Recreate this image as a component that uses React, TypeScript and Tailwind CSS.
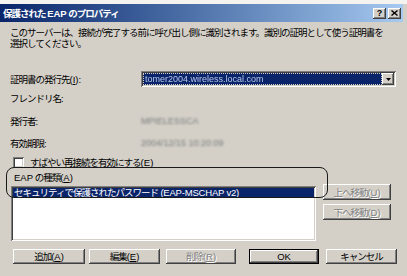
import React from "react";

const raised =
  "shadow-[inset_-1px_-1px_0_#404040,inset_1px_1px_0_#ffffff,inset_-2px_-2px_0_#808080,inset_2px_2px_0_#d4d0c8]";
const sunken =
  "shadow-[inset_1px_1px_0_#808080,inset_-1px_-1px_0_#ffffff,inset_2px_2px_0_#404040,inset_-2px_-2px_0_#d4d0c8]";

function Key({ k }: { k: string }) {
  return <span className="underline">{k}</span>;
}

function WinButton({
  children,
  className = "",
  disabled = false,
  isDefault = false,
}: {
  children: React.ReactNode;
  className?: string;
  disabled?: boolean;
  isDefault?: boolean;
}) {
  return (
    <div
      className={`h-[15px] flex items-center justify-center bg-[#d4d0c8] ${
        isDefault ? "border border-black" : ""
      } ${raised} ${disabled ? "text-[#808080] [text-shadow:1px_1px_0_#ffffff]" : "text-black"} ${className}`}
    >
      {children}
    </div>
  );
}

export default function App() {
  return (
    <div
      className="w-[407px] h-[276px] bg-[#d4d0c8] overflow-hidden relative text-black text-[9.5px] tracking-[-1px] leading-[11px]"
      style={{ fontFamily: '"Liberation Sans", "Noto Sans CJK JP", sans-serif' }}
    >
      <div className="h-[4px] bg-[#f4f3ef]" />

      {/* タイトルバー */}
      <div className="mr-[4px] h-[18px] flex items-center bg-linear-to-r from-[#0a246a] to-[#a6caf0] pl-[3px] pr-[2px]">
        <span className="font-bold text-white text-[9.5px]">
          保護された <span className="tracking-normal">EAP</span> のプロパティ
        </span>
        <div className="ml-auto flex gap-[2px]">
          <div className={`w-[13px] h-[11px] bg-[#d4d0c8] ${raised} flex items-center justify-center font-bold text-[9px] tracking-normal`}>
            ?
          </div>
          <div className={`w-[13px] h-[11px] bg-[#d4d0c8] ${raised} flex items-center justify-center`}>
            <svg width="7" height="6" viewBox="0 0 7 6">
              <path d="M0.5 0.5 L6.5 5.5 M6.5 0.5 L0.5 5.5" stroke="#000" strokeWidth="1.4" />
            </svg>
          </div>
        </div>
      </div>

      <div className="pl-[10px] pr-[10px]">
        <p className="mt-[5px]">
          このサーバーは、接続が完了する前に呼び出し側に識別されます。識別の証明として使う証明書を
          <br />
          選択してください。
        </p>

        {/* 証明書の発行先 */}
        <div className="mt-[22px] h-[16px] flex items-center">
          <span className="w-[131px]">
            証明書の発行先<span className="tracking-normal">(<Key k="I" />):</span>
          </span>
          <div className={`w-[255px] h-[16px] bg-white ${sunken} flex items-center p-[2px]`}>
            <div className="flex-1 h-full bg-[#0a246a] flex items-center px-[2px] outline-1 outline-dotted outline-[#d4d0c8] -outline-offset-1">
              <span className="text-[#b8c6ec] blur-[0.7px] tracking-normal text-[9px]">tomer2004.wireless.local.com</span>
            </div>
            <div className={`w-[12px] h-full bg-[#d4d0c8] ${raised} flex items-center justify-center`}>
              <svg width="5" height="3" viewBox="0 0 5 3">
                <path d="M0 0 H5 L2.5 3 Z" fill="#000" />
              </svg>
            </div>
          </div>
        </div>

        <div className="mt-[5px] h-[12px] flex items-center">
          <span className="w-[131px]">フレンドリ名:</span>
        </div>
        <div className="mt-[11px] h-[12px] flex items-center">
          <span className="w-[131px]">発行者:</span>
          <span className="text-[#7c7c7c] blur-[0.8px] tracking-normal text-[9px]">MPIELESSCA</span>
        </div>
        <div className="mt-[10px] h-[12px] flex items-center">
          <span className="w-[131px]">有効期限:</span>
          <span className="text-[#7c7c7c] blur-[0.8px] tracking-normal text-[9px]">2004/12/15 10:20:09</span>
        </div>

        {/* 高速再接続 */}
        <div className="mt-[7px] h-[12px] flex items-center pl-[3px] gap-[6px]">
          <div className={`w-[11px] h-[11px] bg-white ${sunken}`} />
          <span>
            すばやい再接続を有効にする<span className="tracking-normal">(<Key k="E" />)</span>
          </span>
        </div>

        {/* EAP の種類 */}
        <div className="mt-[3px] h-[12px] flex items-center pl-[4px]">
          <span>
            <span className="tracking-normal">EAP</span> の種類<span className="tracking-normal">(<Key k="A" />)</span>
          </span>
        </div>

        <div className="mt-[3px] flex items-start">
          <div className={`ml-[1px] w-[305px] h-[55px] bg-white ${sunken} p-[2px]`}>
            <div className="h-[9px] bg-[#0a246a] text-white flex items-center pl-[1px]">
              セキュリティで保護されたパスワード<span className="tracking-[-0.2px]">&nbsp;(EAP-MSCHAP v2)</span>
            </div>
          </div>
          <div className="ml-[7px] -mt-[2px] flex flex-col gap-[4px]">
            <WinButton className="w-[68px] h-[16px]" disabled>
              上へ移動<span className="tracking-normal">(<Key k="U" />)</span>
            </WinButton>
            <WinButton className="w-[68px] h-[16px]" disabled>
              下へ移動<span className="tracking-normal">(<Key k="D" />)</span>
            </WinButton>
          </div>
        </div>

        {/* 下部ボタン */}
        <div className="mt-[8px] flex items-center pl-[3px]">
          <WinButton className="w-[72px]">
            追加<span className="tracking-normal">(<Key k="A" />)</span>
          </WinButton>
          <WinButton className="w-[71px] ml-[4px]">
            編集<span className="tracking-normal">(<Key k="E" />)</span>
          </WinButton>
          <WinButton className="w-[70px] ml-[6px]" disabled>
            削除<span className="tracking-normal">(<Key k="R" />)</span>
          </WinButton>
          <WinButton className="w-[70px] ml-[13px]" isDefault>
            <span className="tracking-normal">OK</span>
          </WinButton>
          <WinButton className="w-[71px] ml-[7px]">キャンセル</WinButton>
        </div>
      </div>

      {/* 注記の枠 */}
      <div className="absolute left-[6px] top-[167px] w-[322px] h-[31px] rounded-[8px] border-[1.5px] border-[#1a1a1a] pointer-events-none" />
    </div>
  );
}
